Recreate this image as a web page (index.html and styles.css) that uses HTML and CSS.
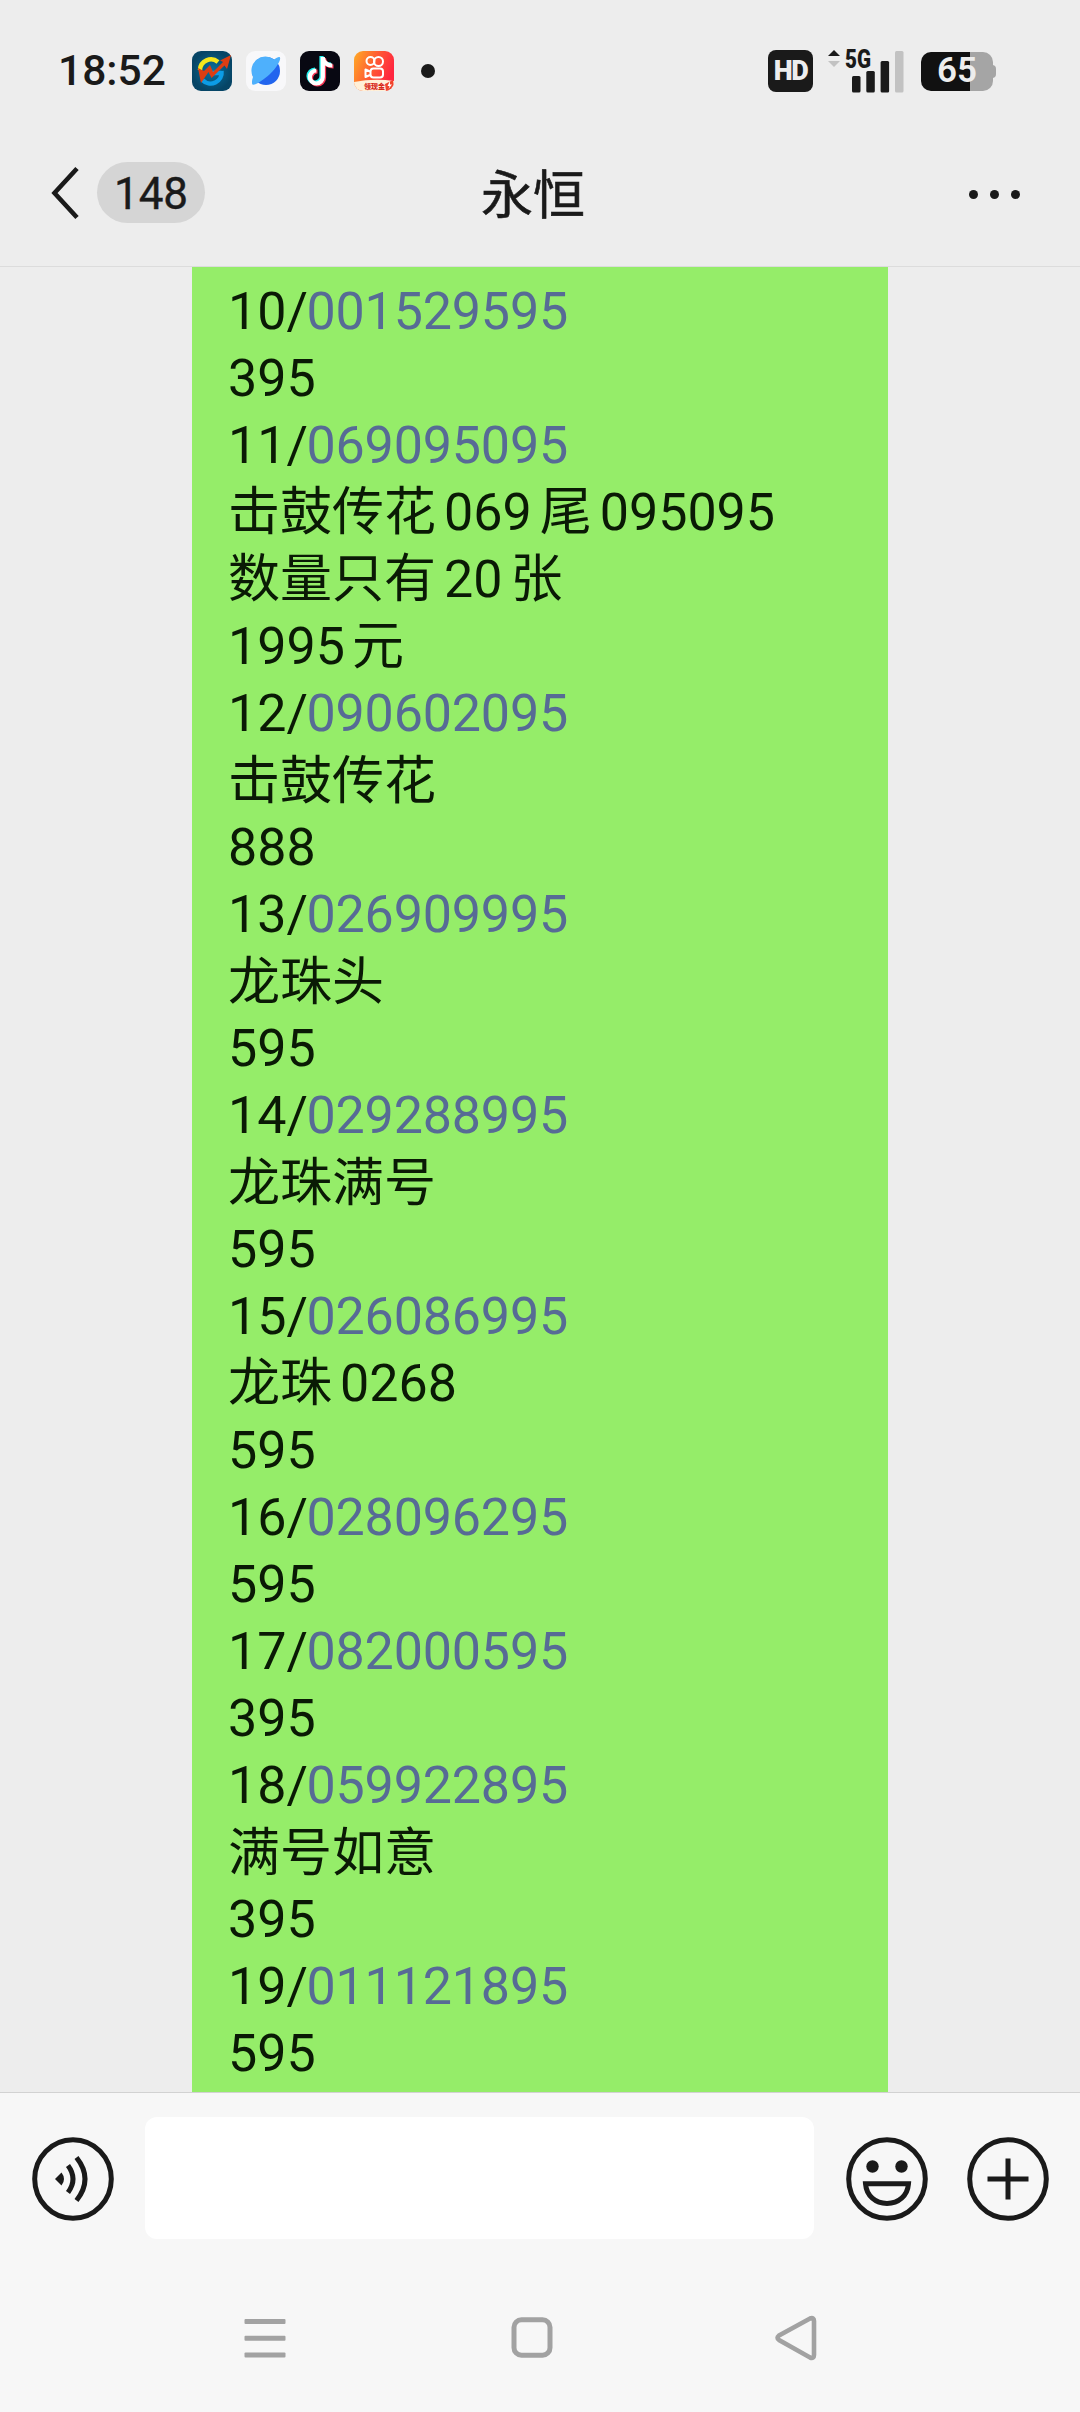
FILE: index.html
```html
<!DOCTYPE html>
<html lang="zh-CN">
<head>
  <meta charset="utf-8">
  <title>永恒</title>
  <link rel="stylesheet" href="styles.css">
</head>
<body>
  <div class="statusbar">
    <span class="clock">18:52</span>
    <div class="apps">
      <!-- stocks -->
      <svg width="40" height="40" viewBox="0 0 40 40">
        <defs><radialGradient id="navy"><stop offset="0" stop-color="#0870a0"/><stop offset="1" stop-color="#064566"/></radialGradient></defs>
        <rect width="40" height="40" rx="9" fill="url(#navy)"/>
        <path d="M8 19a11 11 0 0 1 18-8" fill="none" stroke="#f5e61d" stroke-width="4.500"/>
        <path d="M29.500 20a11 11 0 0 1-19 9M20 22h9.500" fill="none" stroke="#0c9ce6" stroke-width="4.500"/>
        <path d="M6 17l6 3 6-6 3 7 10-10-3-1.500L39 4l-4 14-2.500-3.500L19.500 27l-3-6L9 32z" fill="#dc3d12"/>
      </svg>
      <!-- browser -->
      <svg width="40" height="40" viewBox="0 0 40 40">
        <rect width="40" height="40" rx="9" fill="#f8f8fa"/>
        <circle cx="20" cy="20" r="14" fill="#2265ee"/>
        <path d="M7 26A14 14 0 0 1 28 8.500C31 6.500 33 5.500 34 6.500 35 9 31 16 24 23 17 29.500 8 35 6.500 33.500 5.500 32.500 6 29 7 26z" fill="#4eb0fc"/>
      </svg>
      <!-- short video -->
      <svg width="40" height="40" viewBox="0 0 40 40">
        <rect width="40" height="40" rx="9" fill="#080812"/>
        <g fill="none" stroke-width="4.200">
          <path d="M21.500 5v20a6.500 6.500 0 1 1-6.500-6.500M21.500 6c1 5 4.500 7.500 9.500 7.500" stroke="#25f1ee"/>
          <path d="M24 7v20a6.500 6.500 0 1 1-6.500-6.500M24 8c1 5 4.500 7.500 9.500 7.500" stroke="#f83755"/>
          <path d="M22.800 6v20a6.500 6.500 0 1 1-6.500-6.500M22.800 7c1 5 4.500 7.500 9.500 7.500" stroke="#fff"/>
        </g>
      </svg>
      <!-- video camera -->
      <svg width="40" height="40" viewBox="0 0 40 40">
        <defs>
          <linearGradient id="orange" x2="1" y2=".4"><stop offset="0" stop-color="#ffac25"/><stop offset=".55" stop-color="#ff5933"/><stop offset="1" stop-color="#ff2640"/></linearGradient>
          <clipPath id="tile"><rect width="40" height="40" rx="9"/></clipPath>
        </defs>
        <g clip-path="url(#tile)">
          <rect width="40" height="40" fill="url(#orange)"/>
          <path d="M0 31q20-4 40-1v10H0z" fill="#fff0d8"/>
          <g fill="none" stroke="#fff" stroke-width="2">
            <circle cx="16.500" cy="10" r="4"/><circle cx="24.500" cy="10.500" r="4.500"/>
            <rect x="16.500" y="17.500" width="12.500" height="9" rx="3"/>
            <path d="M16 20.500l-4.500-2v7.500l4.500-2" stroke-linejoin="round"/>
          </g>
          <text x="10" y="37.500" class="promo">领现金</text>
          <path d="M32 40l-1-7 8-4 1 8-6 3z" fill="#f0432c"/>
          <path d="M36 30l-2.500 5h2l-1 3 3.500-4.500h-2z" fill="#fff"/>
        </g>
      </svg>
    </div>
    <span class="more-dot"></span>
    <div class="system">
      <span class="hd">HD</span>
      <svg class="signal" width="77" height="44" viewBox="0 0 77 44">
        <path d="M6 1l6 6H0z" fill="#1a1a1a"/>
        <path d="M6 18l6-6H0z" fill="#c2c2c2"/>
        <text x="17" y="18.500" textLength="26" lengthAdjust="spacingAndGlyphs" class="net">5G</text>
        <g fill="#1a1a1a">
          <rect x="24" y="27" width="8.500" height="16.500" rx="1.500"/>
          <rect x="38.300" y="22" width="8.500" height="21.500" rx="1.500"/>
          <rect x="52.600" y="12" width="8.500" height="31.500" rx="1.500"/>
        </g>
        <rect x="67" y="2" width="8.500" height="41.500" rx="1.500" fill="#c2c2c2"/>
      </svg>
      <div class="battery"><span>65</span></div>
    </div>
  </div>

  <div class="titlebar">
    <svg class="back" width="30" height="54" viewBox="0 0 30 54">
      <path d="M27 2.500L4.500 27 27 51.500" fill="none" stroke="#1a1a1a" stroke-width="4.600"/>
    </svg>
    <span class="unread">148</span>
    <h1>永恒</h1>
    <div class="menu"><i></i><i></i><i></i></div>
  </div>

  <div class="chat">
    <div class="bubble">
      <p>10/<a>001529595</a></p>
      <p>395</p>
      <p>11/<a>069095095</a></p>
      <p>击鼓传花<span class="mid">069</span>尾<span class="mid">095095</span></p>
      <p>数量只有<span class="mid">20</span>张</p>
      <p><span class="first">1995</span>元</p>
      <p>12/<a>090602095</a></p>
      <p class="zh">击鼓传花</p>
      <p>888</p>
      <p>13/<a>026909995</a></p>
      <p class="zh">龙珠头</p>
      <p>595</p>
      <p>14/<a>029288995</a></p>
      <p class="zh">龙珠满号</p>
      <p>595</p>
      <p>15/<a>026086995</a></p>
      <p>龙珠<span class="mid">0268</span></p>
      <p>595</p>
      <p>16/<a>028096295</a></p>
      <p>595</p>
      <p>17/<a>082000595</a></p>
      <p>395</p>
      <p>18/<a>059922895</a></p>
      <p class="zh">满号如意</p>
      <p>395</p>
      <p>19/<a>011121895</a></p>
      <p>595</p>
    </div>
  </div>

  <div class="inputbar">
    <svg width="82" height="84" viewBox="0 0 82 84">
      <g fill="none" stroke="#1a1a1a" stroke-width="5">
        <ellipse cx="41" cy="42" rx="38.300" ry="39.300"/>
        <path d="M36 28.500q10 13.500 0 27M44.500 20.500q17 21.500 0 43"/>
      </g>
      <path d="M23 42l6.500-6.500q5 6.500 0 13z" fill="#1a1a1a"/>
    </svg>
    <div class="field"></div>
    <svg class="emoji" width="82" height="84" viewBox="0 0 82 84">
      <g fill="none" stroke="#1a1a1a" stroke-width="5">
        <ellipse cx="41" cy="42" rx="38.300" ry="39.300"/>
        <path d="M19.500 46.800h43C61.500 59 52.500 66.500 41 66.500S20.500 59 19.500 46.800z"/>
      </g>
      <circle cx="26.500" cy="29.500" r="6.200" fill="#1a1a1a"/>
      <circle cx="55.500" cy="29.500" r="6.200" fill="#1a1a1a"/>
    </svg>
    <svg class="plus" width="82" height="84" viewBox="0 0 82 84">
      <g fill="none" stroke="#1a1a1a" stroke-width="5">
        <ellipse cx="41" cy="42" rx="38.300" ry="39.300"/>
        <path d="M20.500 42h41M41 21.500v41"/>
      </g>
    </svg>
  </div>

  <div class="navbar">
    <svg width="42" height="46" viewBox="0 0 42 46">
      <g fill="#a2a2a2">
        <rect x="0.500" y="4" width="41" height="5" rx="1"/>
        <rect x="0.500" y="20.800" width="41" height="5" rx="1"/>
        <rect x="0.500" y="37.500" width="41" height="5" rx="1"/>
      </g>
    </svg>
    <svg class="home" width="42" height="46" viewBox="0 0 42 46">
      <rect x="3" y="4.800" width="36" height="35.500" rx="7.500" fill="none" stroke="#a2a2a2" stroke-width="5"/>
    </svg>
    <svg class="prev" width="42" height="46" viewBox="0 0 42 46">
      <path d="M4 20.500L35 3.500q4-1.500 4 2.500v34q0 4-4 2.500L4 25q-3-2.200 0-4.500z" fill="none" stroke="#a2a2a2" stroke-width="4.600"/>
    </svg>
  </div>
</body>
</html>
```
FILE: styles.css
```css
* {
  box-sizing: border-box;
}

body {
  margin: 0;
  width: 1080px;
  height: 2412px;
  overflow: hidden;
  display: flex;
  flex-direction: column;
  background-color: #ededed;
  color: #1a1a1a;
  font-family: Roboto, "Noto Sans CJK SC", sans-serif;
}

svg {
  display: block;
  flex: none;
  overflow: visible;
}

/* phone status bar */
.statusbar {
  height: 120px;
  padding: 22px 87px 0 58px;
  display: flex;
  align-items: center;
}
.clock {
  width: 134px;
  font-size: 42.5px;
  font-weight: 500;
  line-height: 54px;
}
.apps {
  display: flex;
  gap: 14px;
}
.promo {
  font-size: 7px;
  font-weight: 900;
  fill: #d8291c;
}
.more-dot {
  width: 14px;
  height: 14px;
  margin-left: 27px;
  border-radius: 50%;
  background-color: #1a1a1a;
}
.system {
  margin-left: auto;
  display: flex;
  align-items: center;
}
.hd {
  width: 45px;
  height: 42px;
  border-radius: 8px;
  background-color: #1a1a1a;
  color: #ededed;
  font-size: 27px;
  font-weight: 900;
  line-height: 43px;
  text-align: center;
  letter-spacing: -1.5px;
}
.signal {
  margin: 0 16px 0 15px;
}
.net {
  font-size: 25px;
  font-weight: 900;
  fill: #1a1a1a;
}
.battery {
  position: relative;
  width: 72px;
  height: 39px;
  border-radius: 10px;
  background: linear-gradient(to right, #111 49px, #a5a5a5 49px);
  color: #ededed;
  font-size: 35px;
  font-weight: 600;
  line-height: 38px;
  text-align: center;
}
.battery::after {
  content: "";
  position: absolute;
  left: 71px;
  top: 13px;
  width: 4px;
  height: 13px;
  border-radius: 0 4px 4px 0;
  background-color: #a5a5a5;
}

/* conversation header */
.titlebar {
  height: 147px;
  padding: 0 60px 0 50px;
  display: flex;
  align-items: center;
  border-bottom: 1px solid #dcdcdc;
}
.unread {
  width: 108px;
  height: 61px;
  margin: -2px 0 0 17px;
  border-radius: 31px;
  background-color: #d5d5d5;
  font-size: 44px;
  line-height: 65px;
  text-align: center;
  -webkit-text-stroke: 0.4px #1a1a1a;
}
h1 {
  width: 104px;
  margin: 7px 0 0 276px;
  font-size: 52px;
  font-weight: 400;
  line-height: 60px;
  -webkit-text-stroke: 0.6px #1a1a1a;
}
.menu {
  margin: 3px 0 0 auto;
  display: flex;
  gap: 12px;
}
.menu i {
  width: 9px;
  height: 9px;
  border-radius: 50%;
  background-color: #1a1a1a;
}

/* messages */
.chat {
  height: 1825px;
  overflow: hidden;
}
.bubble {
  width: 696.4px;
  height: 100%;
  margin-left: 192px;
  padding: 11px 0 0 36px;
  background-color: #95ed69;
  color: #0a1a05;
  font-size: 52px;
}
.bubble p {
  margin: 0;
  height: 67px;
  line-height: 67px;
  white-space: nowrap;
}
.bubble .zh {
  line-height: 69px;
}
.bubble a {
  margin-left: -1.5px;
  color: #576b95;
  letter-spacing: -0.15px;
}
.mid {
  margin: 0 8px;
}
.first {
  margin-right: 7px;
}

/* bottom input bar */
.inputbar {
  height: 172px;
  padding: 24px 31px 0 32px;
  display: flex;
  align-items: flex-start;
  background-color: #f7f7f7;
  border-top: 1px solid #d2d2d2;
}
.inputbar svg {
  margin-top: 20px;
}
.field {
  width: 669px;
  height: 122px;
  margin-left: 31px;
  border-radius: 12px;
  background-color: #fff;
}
.emoji {
  margin-left: 32px;
}
.plus {
  margin-left: 39px;
}

.navbar {
  flex: 1;
  padding: 51px 0 0 244px;
  display: flex;
  background-color: #f7f7f7;
}
.home {
  margin-left: 225px;
}
.prev {
  margin-left: 222px;
}
```
